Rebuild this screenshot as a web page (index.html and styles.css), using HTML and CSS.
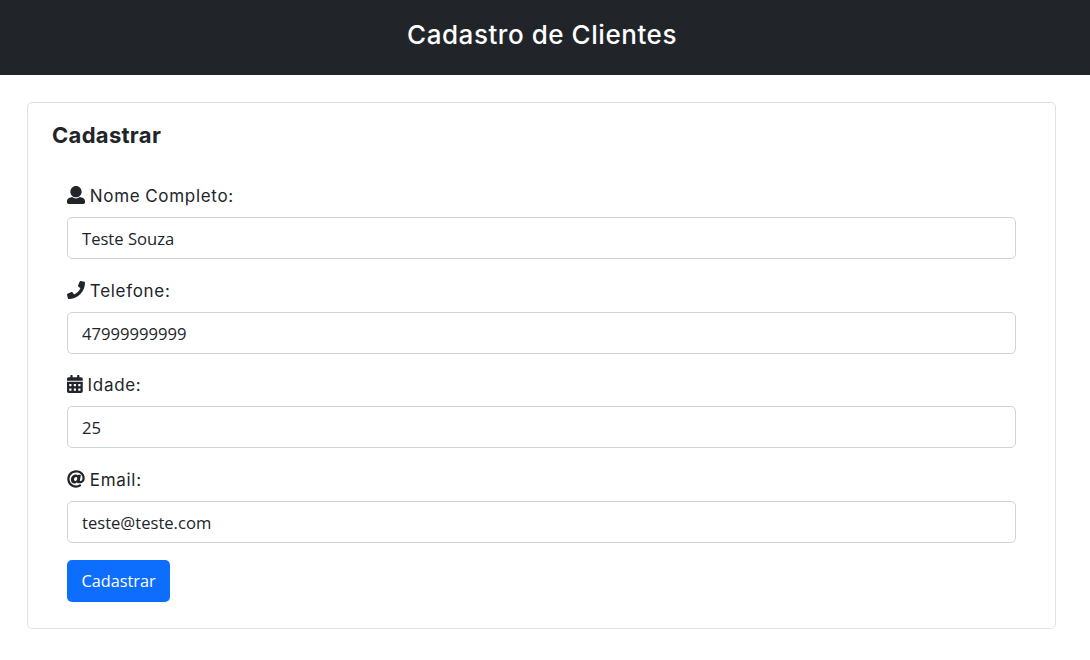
FILE: index.html
```html
<!DOCTYPE html>
<html lang="pt-BR">
<head>
<meta charset="utf-8">
<title>Cadastro de Clientes</title>
<link rel="stylesheet" href="styles.css">
</head>
<body>
<header class="topbar"><h1 class="topbar-title">Cadastro de Clientes</h1></header>
<main class="page">
  <section class="card">
    <h2 class="card-title">Cadastrar</h2>
    <form class="form">
      <div class="field">
        <label class="label" for="nome"><svg class="icon icon-wide" viewBox="0 0 512 512" aria-hidden="true"><path d="M256 0c88.366 0 160 71.634 160 160s-71.634 160-160 160S96 248.366 96 160 167.634 0 256 0zm183.283 333.821l-71.313-17.828c-74.923 53.89-165.738 41.864-223.94 0l-71.313 17.828C29.981 344.505 0 382.903 0 426.955V464c0 26.51 21.49 48 48 48h416c26.51 0 48-21.49 48-48v-37.045c0-44.052-29.981-82.45-72.717-93.134z"/></svg> Nome Completo:</label>
        <input class="input" id="nome" type="text" value="Teste Souza">
      </div>
      <div class="field">
        <label class="label" for="tel"><svg class="icon icon-wide" viewBox="0 0 512 512" aria-hidden="true"><path d="M493.4 24.6l-104-24c-11.3-2.6-22.9 3.3-27.5 13.9l-48 112c-4.2 9.8-1.4 21.3 6.9 28l60.6 49.6c-36 76.7-98.9 140.5-177.2 177.2l-49.6-60.6c-6.8-8.3-18.2-11.1-28-6.9l-112 48C3.9 366.5-2 378.1.6 389.4l24 104C27.1 504.2 36.7 512 48 512c256.1 0 464-207.5 464-464 0-11.2-7.7-20.9-18.6-23.4z"/></svg> Telefone:</label>
        <input class="input" id="tel" type="text" value="47999999999">
      </div>
      <div class="field">
        <label class="label" for="idade"><svg class="icon icon-narrow" viewBox="0 0 448 512" aria-hidden="true"><path d="M0 464c0 26.5 21.5 48 48 48h352c26.5 0 48-21.5 48-48V192H0v272zm320-196c0-6.6 5.4-12 12-12h40c6.6 0 12 5.4 12 12v40c0 6.6-5.4 12-12 12h-40c-6.6 0-12-5.4-12-12v-40zm0 128c0-6.6 5.4-12 12-12h40c6.6 0 12 5.4 12 12v40c0 6.6-5.4 12-12 12h-40c-6.6 0-12-5.4-12-12v-40zM192 268c0-6.6 5.4-12 12-12h40c6.6 0 12 5.4 12 12v40c0 6.6-5.4 12-12 12h-40c-6.6 0-12-5.4-12-12v-40zm0 128c0-6.6 5.4-12 12-12h40c6.6 0 12 5.4 12 12v40c0 6.6-5.4 12-12 12h-40c-6.6 0-12-5.4-12-12v-40zM64 268c0-6.6 5.4-12 12-12h40c6.6 0 12 5.4 12 12v40c0 6.6-5.4 12-12 12H76c-6.6 0-12-5.4-12-12v-40zm0 128c0-6.6 5.4-12 12-12h40c6.6 0 12 5.4 12 12v40c0 6.6-5.4 12-12 12H76c-6.6 0-12-5.4-12-12v-40zM400 64h-48V16c0-8.8-7.2-16-16-16h-32c-8.8 0-16 7.2-16 16v48H160V16c0-8.8-7.2-16-16-16h-32c-8.8 0-16 7.2-16 16v48H48C21.5 64 0 85.5 0 112v48h448v-48c0-26.5-21.5-48-48-48z"/></svg> Idade:</label>
        <input class="input" id="idade" type="text" value="25">
      </div>
      <div class="field">
        <label class="label" for="email"><svg class="icon icon-wide" viewBox="0 0 512 512" aria-hidden="true"><path d="M256 8C118.941 8 8 118.919 8 256c0 137.059 110.919 248 248 248 48.154 0 95.342-14.14 135.408-40.223 12.005-7.815 14.625-24.288 5.552-35.372l-10.177-12.433c-7.671-9.371-21.179-11.667-31.373-5.129C325.92 429.757 291.314 440 256 440c-101.458 0-184-82.542-184-184S154.542 72 256 72c100.139 0 184 57.619 184 160 0 38.786-21.093 79.742-58.17 83.693-17.349-.454-16.91-12.857-13.476-30.024l23.433-121.11C394.653 149.75 383.308 136 368.225 136h-44.981a13.518 13.518 0 0 0-13.432 11.993l-.01.092c-14.697-17.901-40.448-21.775-59.971-21.775-74.58 0-137.831 62.234-137.831 151.46 0 65.303 36.785 105.87 96 105.87 26.984 0 57.369-15.637 74.991-38.333 9.522 34.104 40.613 34.103 70.71 34.103C462.609 379.41 504 307.798 504 232 504 95.653 394.023 8 256 8zm-21.68 304.43c-22.249 0-36.07-15.623-36.07-40.771 0-44.993 30.779-72.729 58.63-72.729 22.292 0 35.601 15.241 35.601 40.77 0 45.061-33.875 72.73-58.161 72.73z"/></svg> Email:</label>
        <input class="input" id="email" type="text" value="teste@teste.com">
      </div>
      <button class="button" type="button">Cadastrar</button>
    </form>
  </section>
</main>
</body>
</html>
```

FILE: styles.css
```css
* { box-sizing: border-box; }
html, body { margin: 0; padding: 0; }
body {
  background: #fff;
  color: #212529;
  font-family: "Open Sans", sans-serif;
  font-size: 16px;
}
.topbar {
  height: 75px;
  padding: 0 6px 5px 0;
  background: #212529;
  display: flex;
  align-items: center;
  justify-content: center;
}
.topbar-title {
  margin: 0;
  color: #fff;
  font-family: Inter, sans-serif;
  font-size: 26px;
  font-weight: 500;
  letter-spacing: 0.55px;
  line-height: 1.2;
}
.page { padding: 27px 34px 0 27px; }
.card {
  height: 527px;
  border: 1px solid #dee2e6;
  border-radius: 5px;
  padding: 19px 39px 0 24px;
}
.card-title {
  margin: 0 0 33px;
  font-family: Inter, sans-serif;
  font-size: 22px;
  font-weight: 700;
  letter-spacing: 0.3px;
  line-height: 26px;
}
.form { padding-left: 15px; }
.field { margin-bottom: 16.5px; }
.field:last-of-type { margin-bottom: 17px; }
.label {
  display: block;
  height: 36px;
  padding-top: 3px;
  font-family: Inter, sans-serif;
  font-size: 17px;
  letter-spacing: 0.7px;
  word-spacing: -0.7px;
  line-height: 24px;
}
.icon { fill: #212529; vertical-align: -2px; height: 18px; }
.icon-wide { width: 18px; }
.icon-narrow { width: 15.75px; }
.input {
  display: block;
  width: 100%;
  height: 42px;
  padding: 1px 14px 0;
  border: 1px solid #ced4da;
  border-radius: 5px;
  background: #fff;
  color: #212529;
  font-family: "Open Sans", sans-serif;
  font-size: 16.6px;
  font-weight: 400;
}
.button {
  display: block;
  height: 42px;
  width: 103px;
  padding: 1px 0 0;
  border: 0;
  border-radius: 5px;
  background: #0d6efd;
  color: #fff;
  font-family: "Open Sans", sans-serif;
  font-size: 16.3px;
  font-weight: 400;
}
```
